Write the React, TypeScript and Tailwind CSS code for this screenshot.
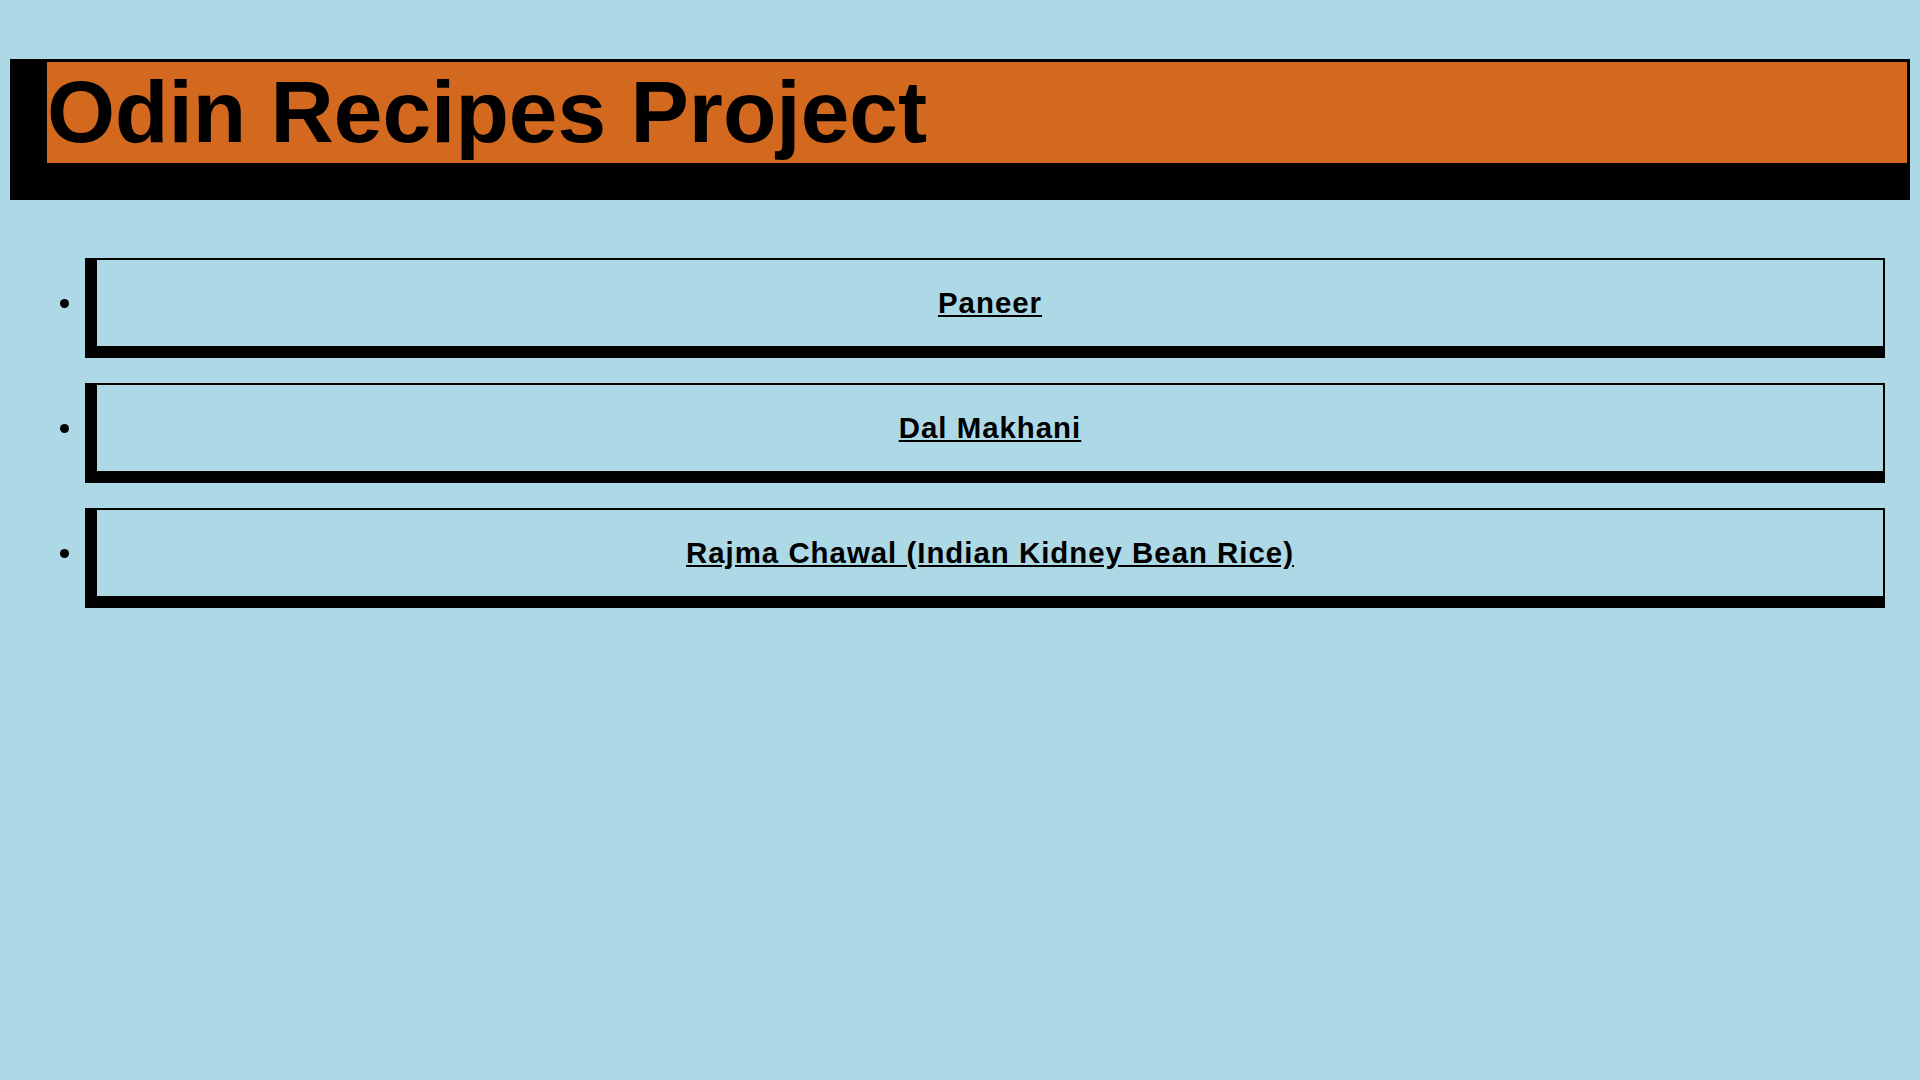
import React from "react";

const recipes = ["Paneer", "Dal Makhani", "Rajma Chawal (Indian Kidney Bean Rice)"];

export default function App() {
  return (
    <div className="min-h-screen bg-[#add8e6] font-['Liberation_Sans',Arial,sans-serif] text-black pt-[59px] px-[10px]">
      <header className="bg-black pt-[3px] pr-[3px] pb-[37px] pl-[37px]">
        <h1 className="bg-[#d2691e] text-[87.5px] leading-[101px] font-bold">Odin Recipes Project</h1>
      </header>
      <ul className="list-disc mt-[58px] pl-[75px] pr-[25px]">
        {recipes.map((r) => (
          <li
            key={r}
            className="box-border h-[100px] border-solid border-black border-t-2 border-r-2 border-b-[12px] border-l-[12px] pt-[26px] mb-[25px] text-center text-[29.4px] leading-[33px] font-bold"
          >
            <a href="#" className="underline tracking-[1px] text-black">
              {r}
            </a>
          </li>
        ))}
      </ul>
    </div>
  );
}
